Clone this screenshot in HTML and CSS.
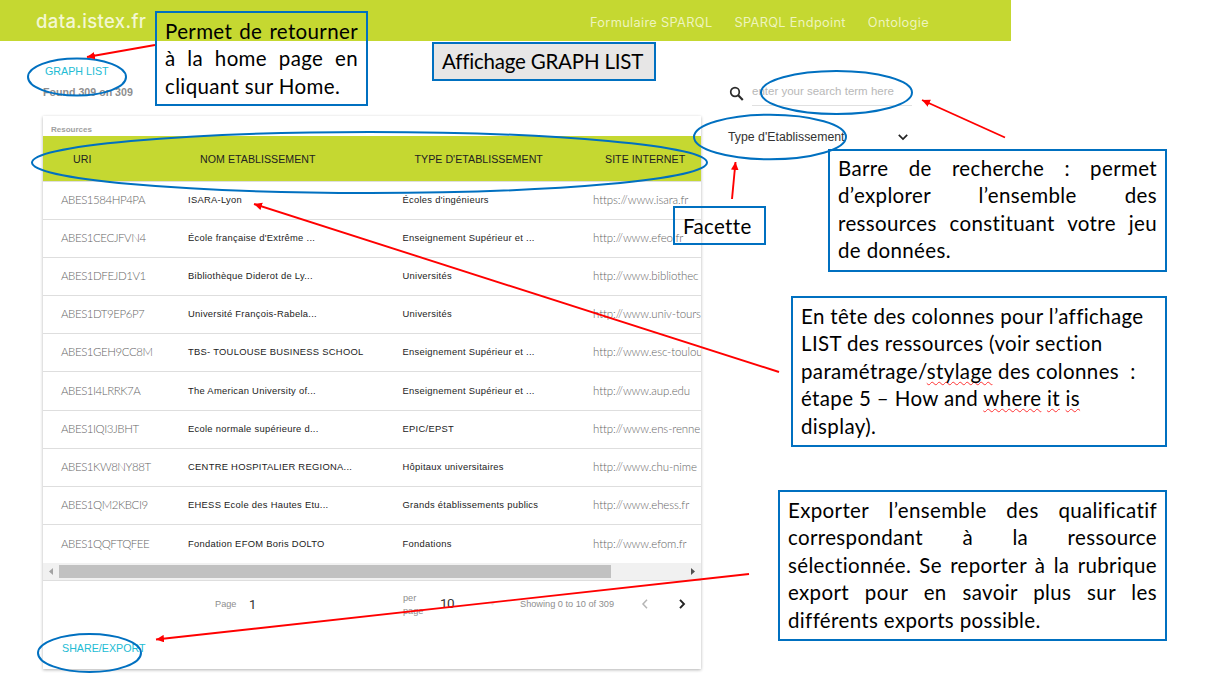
FILE: index.html
```html
<!DOCTYPE html>
<html lang="fr">
<head>
<meta charset="utf-8">
<title>data.istex.fr</title>
<link rel="stylesheet" href="styles.css">
</head>
<body>
<header class="topbar">
  <span class="logo">data.istex.fr</span>
  <nav class="nav"><span>Formulaire SPARQL</span><span>SPARQL Endpoint</span><span>Ontologie</span></nav>
</header>
<main class="page">
  <section class="left">
    <a class="link">GRAPH LIST</a>
    <div class="found">Found 309 on 309</div>
    <div class="card">
      <div class="caption">Resources</div>
      <div class="table">
        <div class="row head"><span>URI</span><span>NOM ETABLISSEMENT</span><span>TYPE D'ETABLISSEMENT</span><span>SITE INTERNET</span></div>
        <div class="row"><span class="uri">ABES1584HP4PA</span><span>ISARA-Lyon</span><span>Écoles d'ingénieurs</span><span class="url">https://www.isara.fr</span></div>
        <div class="row"><span class="uri">ABES1CECJFVN4</span><span>École française d'Extrême ...</span><span>Enseignement Supérieur et ...</span><span class="url">http://www.efeo.fr</span></div>
        <div class="row"><span class="uri">ABES1DFEJD1V1</span><span>Bibliothèque Diderot de Ly...</span><span>Universités</span><span class="url">http://www.bibliothec</span></div>
        <div class="row"><span class="uri">ABES1DT9EP6P7</span><span>Université François-Rabela...</span><span>Universités</span><span class="url">http://www.univ-tours</span></div>
        <div class="row"><span class="uri">ABES1GEH9CC8M</span><span>TBS- TOULOUSE BUSINESS SCHOOL</span><span>Enseignement Supérieur et ...</span><span class="url">http://www.esc-toulou</span></div>
        <div class="row"><span class="uri">ABES1I4LRRK7A</span><span>The American University of...</span><span>Enseignement Supérieur et ...</span><span class="url">http://www.aup.edu</span></div>
        <div class="row"><span class="uri">ABES1IQI3JBHT</span><span>Ecole normale supérieure d...</span><span>EPIC/EPST</span><span class="url">http://www.ens-renne</span></div>
        <div class="row"><span class="uri">ABES1KW8NY88T</span><span>CENTRE HOSPITALIER REGIONA...</span><span>Hôpitaux universitaires</span><span class="url">http://www.chu-nime</span></div>
        <div class="row"><span class="uri">ABES1QM2KBCI9</span><span>EHESS Ecole des Hautes Etu...</span><span>Grands établissements publics</span><span class="url">http://www.ehess.fr</span></div>
        <div class="row"><span class="uri">ABES1QQFTQFEE</span><span>Fondation EFOM Boris DOLTO</span><span>Fondations</span><span class="url">http://www.efom.fr</span></div>
      </div>
      <div class="scroll">
        <svg width="16" height="17"><path d="M10 5v7L6 8.500z" fill="#a3a3a3"/></svg>
        <div class="thumb"></div>
        <svg width="17" height="17"><path d="M7 5v7l4-3.500z" fill="#505050"/></svg>
      </div>
      <div class="pager">
        <span class="p-label">Page</span><span class="p-num">1</span>
        <span class="p-per">per<br>page</span><span class="p-ten">10</span>
        <svg class="p-drop" width="8" height="5"><path d="M1 1h5L3.500 3.500z" fill="#e9e9e9"/></svg>
        <span class="p-show">Showing 0 to 10 of 309</span>
        <svg class="p-prev" width="8" height="12"><path d="M6 1.800L2 6l4 4.200" fill="none" stroke="#b5b5b5" stroke-width="1.500"/></svg>
        <svg class="p-next" width="8" height="12"><path d="M2 1.800L6 6l-4 4.200" fill="none" stroke="#222" stroke-width="1.900"/></svg>
      </div>
      <a class="link share">SHARE/EXPORT</a>
    </div>
  </section>
  <aside class="right">
    <div class="search">
      <svg width="16" height="16" viewBox="0 0 16 16" fill="none" stroke="#2b2b2b"><circle cx="6" cy="6" r="4.300" stroke-width="1.700"/><path d="M9.200 9.300l4.600 4.700" stroke-width="2.200"/></svg>
      <div class="field">enter your search term here</div>
    </div>
    <div class="facet"><span>Type d'Etablissement</span>
      <svg width="12" height="8"><path d="M1.800 1.800L6 6l4.200-4.200" fill="none" stroke="#222" stroke-width="1.700"/></svg>
    </div>
  </aside>
</main>

<svg class="marks" width="1219" height="690" viewBox="0 0 1219 690">
  <defs><marker id="tip" markerUnits="userSpaceOnUse" markerWidth="9" markerHeight="8" refX="8" refY="3.800" orient="auto"><path d="M0 0L8 3.800L0 7.600z" fill="#f00"/></marker></defs>
  <g fill="none" stroke="#0070c0" stroke-width="2">
    <ellipse cx="77" cy="77" rx="49" ry="18.500"/>
    <ellipse cx="836.500" cy="92.500" rx="75.500" ry="21.500"/>
    <ellipse cx="770" cy="137" rx="76" ry="22.300"/>
    <ellipse cx="369.500" cy="162.500" rx="337.500" ry="30.500"/>
    <ellipse cx="89.500" cy="653" rx="51.500" ry="19"/>
  </g>
  <g stroke="#f00" stroke-width="1.900">
    <path d="M155 45L87 57" marker-end="url(#tip)"/>
    <path d="M1005 137.500L922 100" marker-end="url(#tip)"/>
    <path d="M732 199L735.500 162" marker-end="url(#tip)"/>
    <path d="M779 372L254 204" marker-end="url(#tip)"/>
    <path d="M749 574L156 639.500" marker-end="url(#tip)"/>
  </g>
</svg>

<div class="note home"><p class="full">Permet de retourner</p><p class="full">à la home page en</p><p>cliquant sur Home.</p></div>
<div class="note title"><p>Affichage GRAPH LIST</p></div>
<div class="note facette"><p>Facette</p></div>
<div class="note barre"><p class="full">Barre de recherche : permet</p><p class="full">d’explorer l’ensemble des</p><p class="full">ressources constituant votre jeu</p><p>de données.</p></div>
<div class="note cols"><p>En tête des colonnes pour l’affichage</p><p>LIST des ressources (voir section</p><p>paramétrage/<u>stylage</u> des colonnes&nbsp; :</p><p>étape 5 – How and <u>where</u> <u>it</u> <u>is</u></p><p>display).</p></div>
<div class="note export"><p class="full">Exporter l’ensemble des qualificatif</p><p class="full">correspondant à la ressource</p><p class="full">sélectionnée. Se reporter à la rubrique</p><p class="full">export pour en savoir plus sur les</p><p>différents exports possible.</p></div>
</body>
</html>
```
FILE: styles.css
```css
* { box-sizing: border-box; }
body { margin: 0; width: 1219px; height: 690px; position: relative; overflow: hidden; background: #fff; font-family: "Liberation Sans", Arial, sans-serif; }
svg { display: block; flex: none; }
.topbar { width: 1011px; height: 41px; background: #c5d831; display: flex; align-items: center; justify-content: space-between; padding: 0 82px 0 36px; color: #f3f7d2; font-family: Inter, sans-serif; }
.logo { font-size: 18.500px; font-weight: 500; letter-spacing: .35px; }
.nav { display: flex; gap: 22px; font-size: 12.800px; letter-spacing: .32px; padding-top: 3px; white-space: nowrap; color: #eef4bd; }
.page { display: flex; gap: 27px; padding-left: 43px; }
.left { width: 658px; padding-top: 22px; }
.link { display: block; font-size: 10.700px; line-height: 16px; color: #22bcd4; padding-left: 2px; }
.found { font-size: 10.650px; font-weight: bold; line-height: 14px; color: #8e8e8e; margin-top: 6px; }
.card { margin-top: 17px; height: 553px; padding-top: 7px; box-shadow: 0 1px 3px rgba(0,0,0,.3); }
.caption { font-size: 8px; line-height: 13px; font-weight: bold; color: #a0a0a0; padding-left: 8px; }
.table { overflow: hidden; }
.row { display: grid; grid-template-columns: 127px 214.500px 190.500px 1fr; height: 38.200px; align-items: center; padding: 0 0 2px 18px; border-bottom: 1px solid #dedede; font-size: 9.400px; letter-spacing: .28px; color: #222; white-space: nowrap; }
.row:last-child { border-bottom: 0; }
.head { height: 45.500px; background: #c5d831; font-size: 10.650px; letter-spacing: .03px; padding: 2px 0 0 30px; }
.uri, .url { font-family: Lato, sans-serif; font-weight: 300; font-size: 11.500px; color: #666; letter-spacing: -.12px; }
.uri { letter-spacing: -.45px; }
.scroll { height: 18px; display: flex; align-items: center; background: #f1f1f1; border-bottom: 1px solid #dedede; }
.thumb { width: 552px; height: 13px; background: #c1c1c1; margin-right: 73px; }
.pager { height: 46px; display: flex; align-items: center; padding-left: 172px; font-size: 9.200px; color: #8e8e8e; white-space: nowrap; }
.p-label { width: 34px; }
.p-num, .p-ten { font-family: Roboto, sans-serif; font-size: 13px; color: #333; }
.p-num { width: 154px; }
.p-per { width: 37px; line-height: 13px; padding-top: 2px; }
.p-ten { width: 49px; padding-bottom: 2px; letter-spacing: -.6px; font-size: 13.500px; }
.p-show { margin-left: 23px; width: 121px; }
.p-next { margin-left: 29px; }
.share { margin-top: 13px; padding-left: 19px; }
.right { padding-top: 41px; width: 200px; }
.search { display: flex; gap: 7px; padding-left: 1px; }
.search svg { margin-top: 4px; }
.field { width: 160px; height: 24px; line-height: 19px; border-bottom: 1px solid #e0e0e0; font-size: 11.500px; color: #b8b8b8; }
.facet { display: flex; justify-content: space-between; align-items: center; width: 181px; margin-top: 21px; height: 20px; font-size: 12.300px; color: #333; }
.marks { position: absolute; left: 0; top: 0; }
.note { position: absolute; border: 2px solid #0070c0; padding: 5px 8px; color: #000; font-family: Lato, sans-serif; font-size: 20.500px; letter-spacing: .36px; line-height: 27.400px; white-space: nowrap; }
.note p { margin: 0; }
.note .full { text-align-last: justify; }
.note u { text-decoration: underline wavy #f33 1px; text-underline-offset: 2px; text-decoration-skip-ink: none; }
.home { left: 155px; top: 11px; width: 213px; height: 95px; }
.title { left: 432px; top: 42px; width: 224px; height: 39px; background: #e7e6e6; padding-top: 4px; letter-spacing: -.2px; }
.facette { left: 673px; top: 206px; width: 93px; height: 39px; }
.barre { left: 828px; top: 149px; width: 339px; height: 123px; padding-top: 4px; }
.cols { left: 791px; top: 296px; width: 376px; height: 151px; }
.export { left: 778px; top: 490px; width: 389px; height: 151px; }
```
